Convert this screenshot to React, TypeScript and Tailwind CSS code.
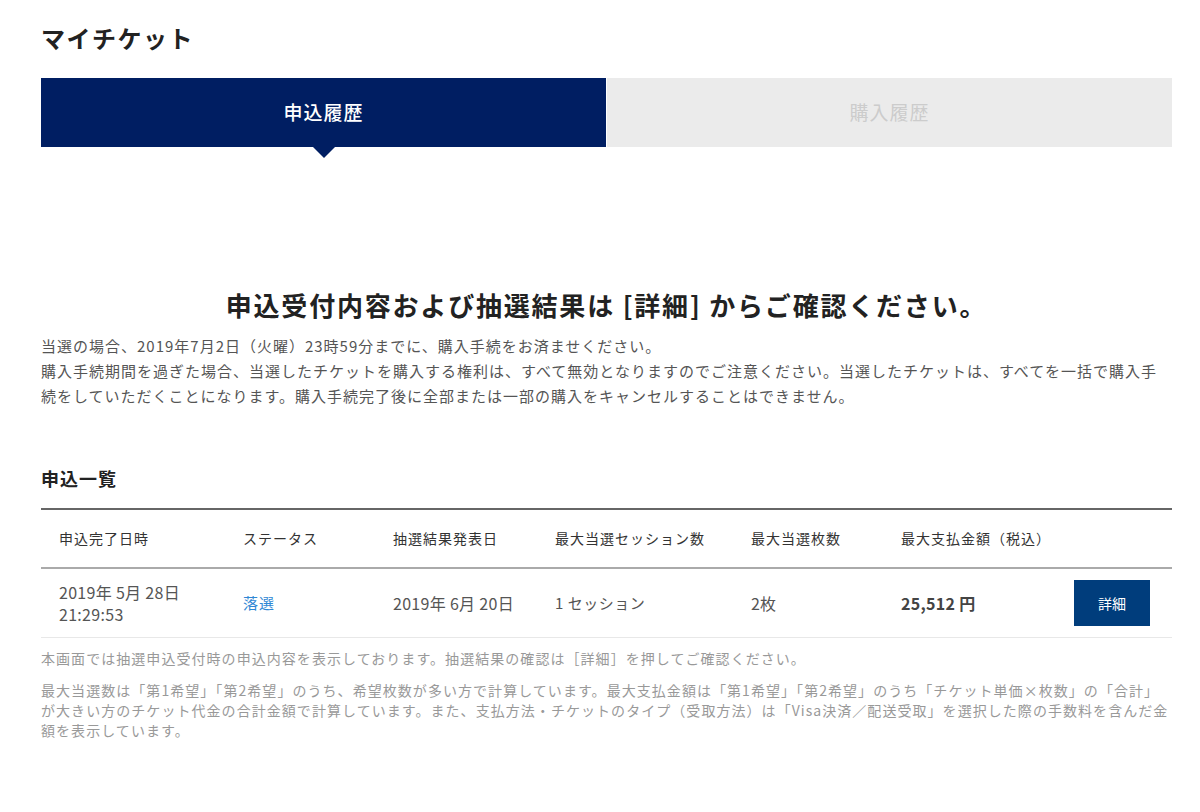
import React from "react";

const font = { fontFamily: '"Noto Sans CJK JP", "Noto Sans", sans-serif' };

export default function App() {
  return (
    <div className="min-h-[812px] bg-white" style={font}>
      <div className="mx-[41px] w-[1131px] pt-[22px]">
        <h1 className="text-[24px] leading-[32px] font-bold text-[#222] tracking-[1.5px] mb-[24px]">マイチケット</h1>

        <div className="flex h-[69px]">
          <div className="relative flex-1 bg-[#001e62] flex items-center justify-center">
            <span className="text-white text-[19px] font-medium tracking-[1px]">申込履歴</span>
            <span className="absolute left-1/2 -translate-x-1/2 top-full w-0 h-0 border-l-[11px] border-r-[11px] border-t-[11px] border-l-transparent border-r-transparent border-t-[#001e62]" />
          </div>
          <div className="w-px bg-white" />
          <div className="flex-1 bg-[#ebebeb] flex items-center justify-center">
            <span className="text-[#cccccc] text-[19px] tracking-[1px]">購入履歴</span>
          </div>
        </div>

        <h2 className="mt-[140px] text-center text-[26px] leading-[36px] font-bold text-[#222] tracking-[1.8px]">
          申込受付内容および抽選結果は [詳細] からご確認ください。
        </h2>
        <div className="mt-[10px] text-[15px] leading-[25px] text-[#555] tracking-[1px]">
          <p>当選の場合、2019年7月2日（火曜）23時59分までに、購入手続をお済ませください。</p>
          <p>購入手続期間を過ぎた場合、当選したチケットを購入する権利は、すべて無効となりますのでご注意ください。当選したチケットは、すべてを一括で購入手続をしていただくことになります。購入手続完了後に全部または一部の購入をキャンセルすることはできません。</p>
        </div>

        <h3 className="mt-[57px] text-[18px] leading-[26px] font-bold text-[#222] tracking-[1px]">申込一覧</h3>

        <div className="mt-[17px] border-t-[2px] border-[#666]">
          <div className="grid grid-cols-[202px_150px_162px_196px_150px_1fr_98px] h-[59px] items-center border-b-[2px] border-[#aaa] text-[14px] text-[#333] tracking-[1px]">
            <div className="pl-[18px]">申込完了日時</div>
            <div>ステータス</div>
            <div>抽選結果発表日</div>
            <div>最大当選セッション数</div>
            <div>最大当選枚数</div>
            <div>最大支払金額（税込）</div>
            <div />
          </div>
          <div className="grid grid-cols-[202px_150px_162px_196px_150px_1fr_98px] h-[69px] items-center border-b border-[#e8e8e8] text-[15px] text-[#555]">
            <div className="pl-[18px] leading-[22px] text-[16px] tracking-[0.3px]">
              <div>2019年 5月 28日</div>
              <div>21:29:53</div>
            </div>
            <div className="text-[#2f87d4] tracking-[1px]">落選</div>
            <div className="text-[16px] tracking-[0.3px]">2019年 6月 20日</div>
            <div className="tracking-[0.5px]">1 セッション</div>
            <div className="text-[16px]">2枚</div>
            <div className="font-bold text-[#444] text-[16px] tracking-[0.3px]">25,512 円</div>
            <div className="pr-[22px]">
              <button className="w-[76px] h-[46px] bg-[#003d7c] text-white text-[14px] flex items-center justify-center">詳細</button>
            </div>
          </div>
        </div>

        <div className="text-[14px] leading-[20px] text-[#999] tracking-[1.05px]">
          <p className="mt-[10px]">本画面では抽選申込受付時の申込内容を表示しております。抽選結果の確認は［詳細］を押してご確認ください。</p>
          <p className="mt-[12px]">最大当選数は「第1希望」「第2希望」のうち、希望枚数が多い方で計算しています。最大支払金額は「第1希望」「第2希望」のうち「チケット単価×枚数」の「合計」が大きい方のチケット代金の合計金額で計算しています。また、支払方法・チケットのタイプ（受取方法）は「Visa決済／配送受取」を選択した際の手数料を含んだ金額を表示しています。</p>
        </div>
      </div>
    </div>
  );
}
